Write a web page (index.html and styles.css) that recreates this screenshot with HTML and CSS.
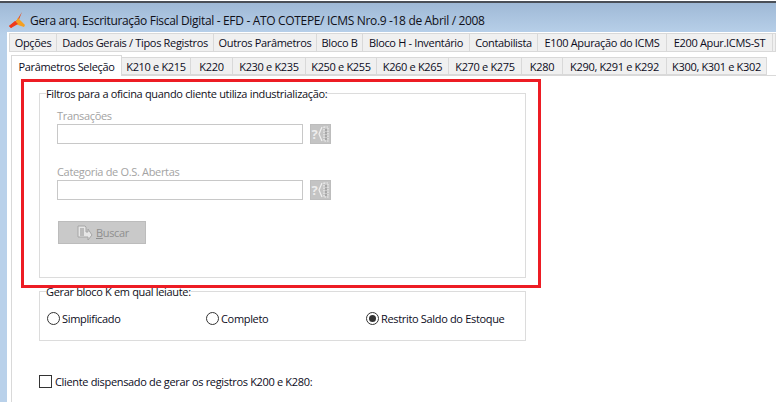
FILE: index.html
```html
<!DOCTYPE html>
<html lang="pt">
<head>
<meta charset="utf-8">
<title>Gera arq.</title>
<link rel="stylesheet" href="styles.css">
</head>
<body>
<div class="window">
  <header class="titlebar">
    <svg class="logo" width="17" height="17" viewBox="0 0 17 17">
      <path d="M13 0 L8 8 L0 14 L2 16 L9 10 Z" fill="#e8501e"/>
      <path d="M9 6 L16 13 L15 15 L9 13 L6 11 Z" fill="#f5a021"/>
      <path d="M0 14 L6 9 L9 12 L2 16 Z" fill="#ee3a1c"/>
    </svg>
    <span class="title">Gera arq. Escrituração Fiscal Digital - EFD - ATO COTEPE/ ICMS Nro.9 -18 de Abril / 2008</span>
  </header>
  <div class="client">
    <nav class="tabs tabs-top">
      <span class="tab">Opções</span>
      <span class="tab">Dados Gerais / Tipos Registros</span>
      <span class="tab">Outros Parâmetros</span>
      <span class="tab">Bloco B</span>
      <span class="tab">Bloco H - Inventário</span>
      <span class="tab">Contabilista</span>
      <span class="tab">E100 Apuração do ICMS</span>
      <span class="tab">E200 Apur.ICMS-ST</span>
      <span class="tab"></span>
    </nav>
    <nav class="tabs tabs-sub">
      <span class="tab active">Parâmetros Seleção</span>
      <span class="tab">K210 e K215</span>
      <span class="tab">K220</span>
      <span class="tab">K230 e K235</span>
      <span class="tab">K250 e K255</span>
      <span class="tab">K260 e K265</span>
      <span class="tab">K270 e K275</span>
      <span class="tab">K280</span>
      <span class="tab">K290, K291 e K292</span>
      <span class="tab">K300, K301 e K302</span>
    </nav>
    <main class="panel">
      <section class="group group-filters">
        <span class="legend">Filtros para a oficina quando cliente utiliza industrialização:</span>
        <div class="field">
          <label class="field-label">Transações</label>
          <div class="field-row">
            <div class="input"></div>
            <div class="lookup">
              <span class="q">?</span>
              <svg width="11" height="16" viewBox="0 0 11 16"><path d="M4 1 L1 8 L4 15" fill="none" stroke="#f0f0f0" stroke-width="1.2"/><path d="M6 1h4v14h-4z" fill="none" stroke="#eee" stroke-width="1.2" stroke-dasharray="1.5 1"/><path d="M7 4h2M7 7h2M7 10h2M7 13h2" stroke="#8c8c8c"/></svg>
            </div>
          </div>
        </div>
        <div class="field">
          <label class="field-label">Categoria de O.S. Abertas</label>
          <div class="field-row">
            <div class="input"></div>
            <div class="lookup">
              <span class="q">?</span>
              <svg width="11" height="16" viewBox="0 0 11 16"><path d="M4 1 L1 8 L4 15" fill="none" stroke="#f0f0f0" stroke-width="1.2"/><path d="M6 1h4v14h-4z" fill="none" stroke="#eee" stroke-width="1.2" stroke-dasharray="1.5 1"/><path d="M7 4h2M7 7h2M7 10h2M7 13h2" stroke="#8c8c8c"/></svg>
            </div>
          </div>
        </div>
        <div class="search">
          <svg width="16" height="16" viewBox="0 0 16 16"><path d="M1 1h7l1 1v5h2V4l4 6-4 5v-3H1z" fill="#e6e6e6" stroke="#a6a6a6"/><path d="M3 4h4M3 6h4M3 8h4M3 10h4" stroke="#8f8f8f"/></svg>
          <span class="search-label"><u>B</u>uscar</span>
        </div>
      </section>
      <section class="group group-layout">
        <span class="legend">Gerar bloco K em qual leiaute:</span>
        <div class="radios">
          <span class="radio-item item-a"><i class="radio"></i>Simplificado</span>
          <span class="radio-item item-b"><i class="radio"></i>Completo</span>
          <span class="radio-item"><i class="radio checked"></i>Restrito Saldo do Estoque</span>
        </div>
      </section>
      <label class="check-row"><i class="check"></i>Cliente dispensado de gerar os registros K200 e K280:</label>
      <div class="highlight"></div>
    </main>
  </div>
</div>
</body>
</html>
```
FILE: styles.css
```css
* { box-sizing: border-box; }
html, body { margin: 0; height: 100%; background: #fff; overflow: hidden; }
body { font-family: "Open Sans", "Noto Sans", sans-serif; font-size: 11px; letter-spacing: -0.33px; color: #0c0c1c; }
.window {
  width: 776px; height: 401px; margin-top: 1px; display: flex; flex-direction: column;
  background: linear-gradient(#9fb9d6 0, #b9d1ea 32px);
  border-top: 2px solid #4a4f57;
  padding-left: 7px;
}
.titlebar { height: 29px; display: flex; align-items: center; margin-left: 2px; flex: none; padding-top: 5px; }
.logo { flex: none; margin-right: 4px; }
.title { font-size: 12px; white-space: nowrap; color: #101018; }
.client { flex: 1; background: #fff; padding: 1px 0 0 2px; display: flex; flex-direction: column; min-height: 0; }
.tabs { display: grid; flex: none; }
.tab { display: flex; align-items: center; justify-content: center; background: #f0f0f0; border: 1px solid #d9d9d9; border-left: 0; white-space: nowrap; }
.tabs-top { height: 19px; grid-template-columns: 48px 157px 103px 46px 107px 68px 129px 106px 1fr; }
.tabs-top .tab:first-child { border-left: 1px solid #d9d9d9; }
.tabs-sub { height: 20px; margin: 3px 0 0 2px; grid-template-columns: 111px 69px 42px 73px 71px 72px 73px 41px 104px 100px; align-items: end; }
.tabs-sub .tab { height: 18px; }
.tabs-sub .tab.active { height: 21px; background: #fff; border: 1px solid #d9d9d9; border-bottom: 0; position: relative; z-index: 1; margin-bottom: -1px; }
.panel {
  flex: 1; position: relative; min-height: 0;
  margin-left: 2px; border-left: 1px solid #d9d9d9; border-top: 1px solid #d9d9d9;
  padding: 17px 0 0 27px;
}
.group { position: relative; width: 487px; border: 1px solid #dcdcdc; }
.group-filters { height: 185px; padding: 13px 17px 0; }
.group-layout { height: 50px; margin-top: 13px; }
.legend { position: absolute; top: -8px; left: 6px; line-height: 15px; background: #fff; color: #101020; white-space: nowrap; }
.field { margin-bottom: 19px; }
.field-label { display: block; color: #a3a3a3; line-height: 17px; height: 17px; }
.field-row { display: flex; gap: 7px; height: 20px; }
.input { width: 246px; border: 1px solid #c8c8c8; background: #fff; }
.lookup { width: 21px; background: #c4c4c4; border: 1px solid #bdbdbd; display: flex; align-items: center; justify-content: center; gap: 1px; }
.q { color: #ededed; font-weight: 700; font-size: 13px; line-height: 1; }
.search { width: 88px; height: 23px; margin: 21px 0 0 1px; background: #c9c9c9; border: 1px solid #bcbcbc; display: flex; align-items: center; padding-left: 18px; gap: 3px; color: #8f8f8f; }
.radios { display: flex; padding: 19px 0 0 7px; align-items: center; }
.radio-item { display: flex; align-items: center; gap: 2px; white-space: nowrap; }
.item-a { width: 159px; }
.item-b { width: 160px; }
.radio { width: 13px; height: 13px; border-radius: 50%; border: 1px solid #333; display: block; flex: none; background: #fff; position: relative; }
.radio.checked::after { content: ""; position: absolute; inset: 2px; border-radius: 50%; background: #333; }
.check-row { display: flex; align-items: center; gap: 3px; margin-top: 33px; height: 14px; white-space: nowrap; }
.check { width: 13px; height: 13px; border: 1px solid #333; display: block; flex: none; }
.highlight { position: absolute; left: 9px; top: 3px; width: 520px; height: 209px; border: 3px solid #ed1c24; pointer-events: none; }
```
